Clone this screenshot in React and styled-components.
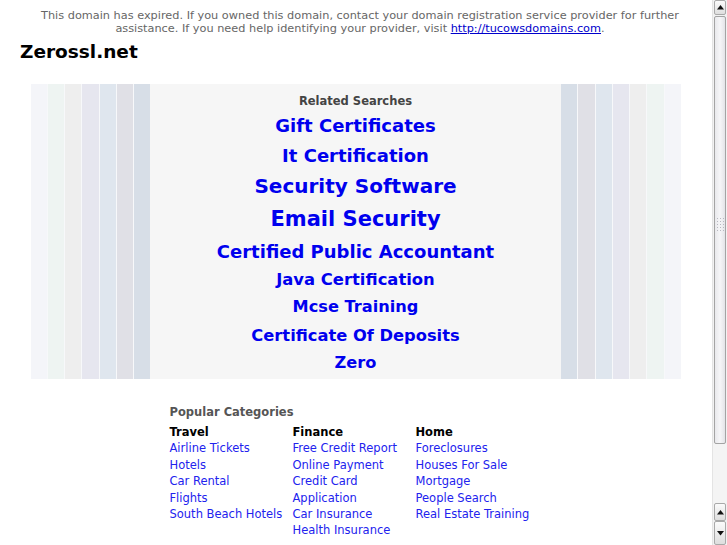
import React from 'react';
import styled, { createGlobalStyle } from 'styled-components';

const GlobalStyle = createGlobalStyle`
  html, body {
    margin: 0;
    padding: 0;
    background: #fff;
    overflow: hidden;
  }
`;

const Frame = styled.div`
  display: flex;
  height: 545px;
  width: 727px;
`;

const Page = styled.div`
  flex: 1;
  overflow: hidden;
  font-family: 'DejaVu Sans', Verdana, sans-serif;
`;

const Notice = styled.div`
  font-size: 11.3px;
  line-height: 13px;
  color: #666;
  text-align: center;
  padding: 9px 22px 0 30px;

  a {
    color: #00c;
  }
`;

const Title = styled.h1`
  font-size: 18.5px;
  font-weight: bold;
  color: #000;
  margin: 0;
  padding: 6px 0 0 20px;
  line-height: 22px;
`;

const Band = styled.div`
  width: 650px;
  margin: 21px auto 0;
  display: grid;
  grid-template-columns: 119px 1fr 120px;
  height: 295px;
`;

const Stripes = styled.div`
  display: flex;
  flex-direction: ${(p) => (p.$mirror ? 'row-reverse' : 'row')};
  gap: 1px;
  background: #f7f8fa;
`;

const Stripe = styled.div`
  flex: 1;
  background: ${(p) => p.$color};
`;

const Center = styled.div`
  background: #f6f6f6;
  display: flex;
  flex-direction: column;
  align-items: center;
  padding-top: 10px;
`;

const Label = styled.div`
  font-size: 11.5px;
  font-weight: bold;
  color: #444;
  line-height: 14px;
  margin-bottom: 3px;
`;

const Search = styled.a`
  display: block;
  font-size: ${(p) => p.$size}px;
  font-weight: bold;
  color: #0000ee;
  text-decoration: none;
  line-height: 1.17;
  padding: 4.4px 0;
`;

const Categories = styled.div`
  width: 392px;
  margin: 25px auto 0;
  padding-left: 19px;
`;

const CatTitle = styled.div`
  font-size: 11.5px;
  font-weight: bold;
  color: #555;
  line-height: 16px;
  margin-bottom: 4px;
`;

const Columns = styled.div`
  display: grid;
  grid-template-columns: 123px 123px 1fr;
`;

const Column = styled.div`
  display: flex;
  flex-direction: column;
  font-size: 11.5px;
  line-height: 16.4px;
`;

const ColHead = styled.div`
  font-weight: bold;
  color: #000;
`;

const CatLink = styled.a`
  color: #2222ee;
  text-decoration: none;
  white-space: nowrap;
`;

const ScrollBar = styled.div`
  width: 15px;
  display: flex;
  flex-direction: column;
  background: #f2f2f2;
  border-left: 1px solid #e4e4e4;
  box-sizing: border-box;
`;

const ArrowButton = styled.div`
  height: ${(p) => p.$h}px;
  margin: 0 1px;
  border: 1px solid #a9a9a9;
  border-radius: 2px;
  background: linear-gradient(#fbfbfb, #dedede);
  box-sizing: border-box;
  display: flex;
  align-items: center;
  justify-content: center;
`;

const Thumb = styled.div`
  height: 428px;
  margin: 1px 1px 0;
  border: 1px solid #a4a4a4;
  border-radius: 2px;
  background: linear-gradient(90deg, #e9e9ec, #f6f6f8 50%, #e4e4e8);
  box-sizing: border-box;
  display: flex;
  align-items: center;
  justify-content: center;
  padding-bottom: 12px;
`;

const Track = styled.div`
  flex: 1;
  background: #f4f4f4;
`;

const Arrow = ({ down }) => (
  <svg width="7" height="5" viewBox="0 0 7 5">
    <path d={down ? 'M0 0h7L3.5 4.5z' : 'M0 4.5h7L3.5 0z'} fill="#111" />
  </svg>
);

const Grip = () => (
  <svg width="7" height="13" viewBox="0 0 7 13">
    {[0, 1, 2, 3, 4].map((r) =>
      [0, 1, 2].map((c) => (
        <rect key={`${r}-${c}`} x={c * 3} y={r * 3} width="1" height="1" fill="#b8b8c0" />
      ))
    )}
  </svg>
);

const stripeColors = ['#f4f5f9', '#eef4f2', '#eeeeee', '#e6e6ef', '#dfe6ee', '#e0e0e6', '#d7dee7'];

const searches = [
  ['Gift Certificates', 18],
  ['It Certification', 18],
  ['Security Software', 20],
  ['Email Security', 21],
  ['Certified Public Accountant', 18],
  ['Java Certification', 16.4],
  ['Mcse Training', 16.2],
  ['Certificate Of Deposits', 16.3],
  ['Zero', 16.2],
];

const categories = [
  ['Travel', ['Airline Tickets', 'Hotels', 'Car Rental', 'Flights', 'South Beach Hotels']],
  ['Finance', ['Free Credit Report', 'Online Payment', 'Credit Card', 'Application', 'Car Insurance', 'Health Insurance']],
  ['Home', ['Foreclosures', 'Houses For Sale', 'Mortgage', 'People Search', 'Real Estate Training']],
];

export default function App() {
  return (
    <>
      <GlobalStyle />
      <Frame>
        <Page>
          <Notice>
            This domain has expired. If you owned this domain, contact your domain registration service provider for further
            assistance. If you need help identifying your provider, visit <a href="#">http://tucowsdomains.com</a>.
          </Notice>
          <Title>Zerossl.net</Title>
          <Band>
            <Stripes>
              {stripeColors.map((c) => (
                <Stripe key={c} $color={c} />
              ))}
            </Stripes>
            <Center>
              <Label>Related Searches</Label>
              {searches.map(([text, size]) => (
                <Search key={text} href="#" $size={size}>
                  {text}
                </Search>
              ))}
            </Center>
            <Stripes $mirror>
              {stripeColors.map((c) => (
                <Stripe key={c} $color={c} />
              ))}
            </Stripes>
          </Band>
          <Categories>
            <CatTitle>Popular Categories</CatTitle>
            <Columns>
              {categories.map(([head, links]) => (
                <Column key={head}>
                  <ColHead>{head}</ColHead>
                  {links.map((l) => (
                    <CatLink key={l} href="#">
                      {l}
                    </CatLink>
                  ))}
                </Column>
              ))}
            </Columns>
          </Categories>
        </Page>
        <ScrollBar>
          <ArrowButton $h={15}>
            <Arrow />
          </ArrowButton>
          <Thumb>
            <Grip />
          </Thumb>
          <Track />
          <ArrowButton $h={18}>
            <Arrow />
          </ArrowButton>
          <ArrowButton $h={24}>
            <Arrow down />
          </ArrowButton>
        </ScrollBar>
      </Frame>
    </>
  );
}
